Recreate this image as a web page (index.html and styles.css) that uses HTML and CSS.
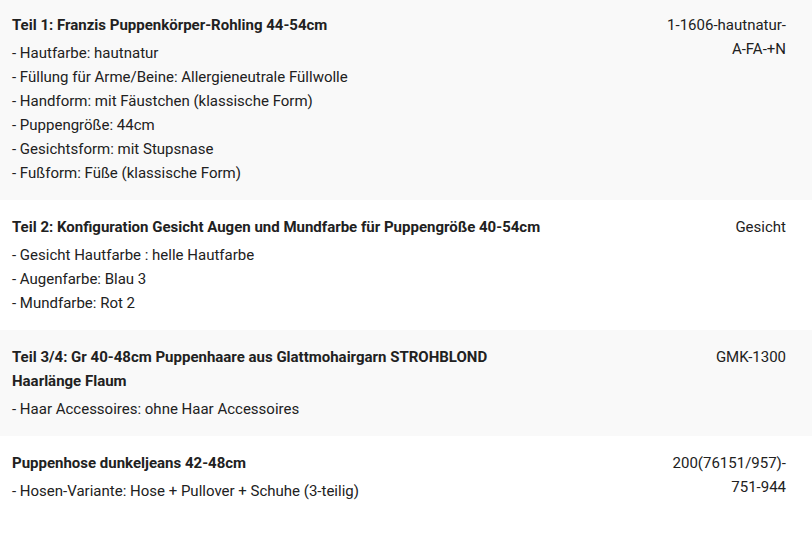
FILE: index.html
```html
<!DOCTYPE html>
<html lang="de">
<head>
<meta charset="utf-8">
<link rel="stylesheet" href="styles.css">
</head>
<body>
<div class="list">
  <div class="row alt first">
    <div class="desc">
      <div class="title">Teil 1: Franzis Puppenkörper-Rohling 44-54cm</div>
      <div class="opt">- Hautfarbe: hautnatur</div>
      <div class="opt">- Füllung für Arme/Beine: Allergieneutrale Füllwolle</div>
      <div class="opt">- Handform: mit Fäustchen (klassische Form)</div>
      <div class="opt">- Puppengröße: 44cm</div>
      <div class="opt">- Gesichtsform: mit Stupsnase</div>
      <div class="opt">- Fußform: Füße (klassische Form)</div>
    </div>
    <div class="sku">1-1606-hautnatur-A-FA-+N</div>
  </div>
  <div class="row">
    <div class="desc">
      <div class="title">Teil 2: Konfiguration Gesicht Augen und Mundfarbe für Puppengröße 40-54cm</div>
      <div class="opt">- Gesicht Hautfarbe : helle Hautfarbe</div>
      <div class="opt">- Augenfarbe: Blau 3</div>
      <div class="opt">- Mundfarbe: Rot 2</div>
    </div>
    <div class="sku">Gesicht</div>
  </div>
  <div class="row alt">
    <div class="desc">
      <div class="title">Teil 3/4: Gr 40-48cm Puppenhaare aus Glattmohairgarn STROHBLOND Haarlänge Flaum</div>
      <div class="opt">- Haar Accessoires: ohne Haar Accessoires</div>
    </div>
    <div class="sku">GMK-1300</div>
  </div>
  <div class="row">
    <div class="desc">
      <div class="title">Puppenhose dunkeljeans 42-48cm</div>
      <div class="opt">- Hosen-Variante: Hose + Pullover + Schuhe (3-teilig)</div>
    </div>
    <div class="sku">200(76151/957)-<wbr><span class="nowrap">751-944</span></div>
  </div>
</div>
</body>
</html>
```
FILE: styles.css
```css
html, body {
  margin: 0;
  padding: 0;
  background: #ffffff;
}
body {
  font-family: Roboto, "Liberation Sans", sans-serif;
  font-size: 15px;
  line-height: 24px;
  color: #212121;
}
.list {
  display: flex;
  flex-direction: column;
}
.first {
  margin-top: -2px;
}
.row {
  display: flex;
  justify-content: space-between;
  padding: 15px 26px 15px 12px;
  background: #ffffff;
}
.row.alt {
  background: #f9f9f9;
}
.desc {
  width: 546px;
}
.title {
  font-weight: 700;
  margin-bottom: 4px;
}
.sku {
  width: 124px;
  text-align: right;
}
.nowrap {
  white-space: nowrap;
}
```
